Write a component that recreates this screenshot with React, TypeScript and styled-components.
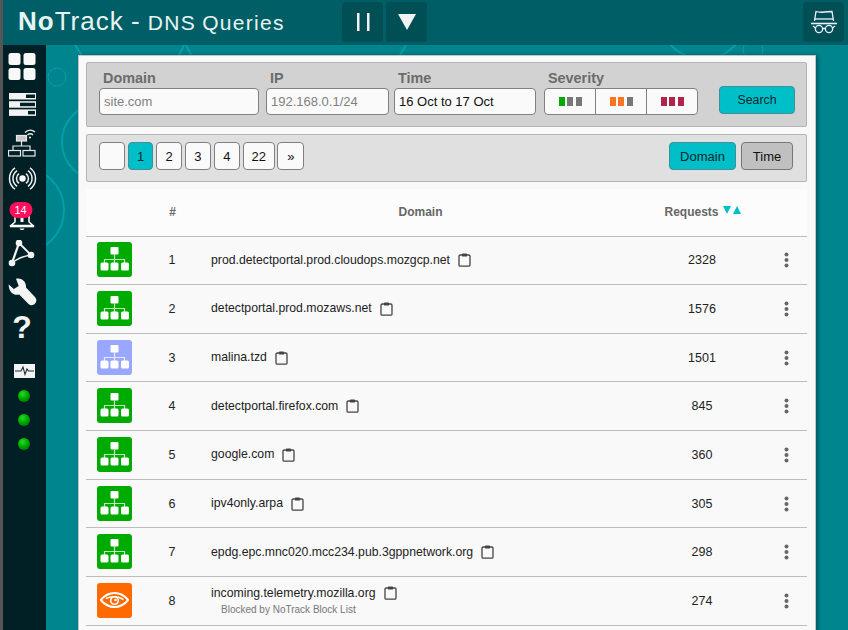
import React from "react";
import styled, { createGlobalStyle } from "styled-components";

const GlobalStyle = createGlobalStyle`
  html, body {
    margin: 0;
    padding: 0;
    height: 100%;
    overflow: hidden;
    font-family: "Liberation Sans", Arial, sans-serif;
    color: #222;
  }
  * { box-sizing: border-box; }
`;

type IconKind = "green" | "blue" | "orange";

const rows: { domain: string; count: number; kind: IconKind; note?: string }[] = [
  { domain: "prod.detectportal.prod.cloudops.mozgcp.net", count: 2328, kind: "green" },
  { domain: "detectportal.prod.mozaws.net", count: 1576, kind: "green" },
  { domain: "malina.tzd", count: 1501, kind: "blue" },
  { domain: "detectportal.firefox.com", count: 845, kind: "green" },
  { domain: "google.com", count: 360, kind: "green" },
  { domain: "ipv4only.arpa", count: 305, kind: "green" },
  { domain: "epdg.epc.mnc020.mcc234.pub.3gppnetwork.org", count: 298, kind: "green" },
  { domain: "incoming.telemetry.mozilla.org", count: 274, kind: "orange", note: "Blocked by NoTrack Block List" },
];

const kindColors: Record<IconKind, string> = {
  green: "#00ab00",
  blue: "#9aa7ff",
  orange: "#ff6a00",
};

const severities = [
  ["#00ab00", "#777", "#777"],
  ["#ff7420", "#ff7420", "#777"],
  ["#b0234a", "#b0234a", "#b0234a"],
];

const Shell = styled.div`
  position: relative;
  width: 848px;
  height: 630px;
  overflow: hidden;
  border-left: 3px solid #555;
  background: #00858e;
  display: grid;
  grid-template-rows: 45px 1fr;
`;

const TopBar = styled.header`
  position: relative;
  z-index: 2;
  background: #005f66;
  display: flex;
  align-items: center;
  padding: 0 4px 1px 15px;
  color: #e8f4f4;
`;

const Title = styled.h1`
  margin: 0 0 2px;
  width: 324px;
  font-size: 26px;
  font-weight: 400;
  letter-spacing: 1px;
  word-spacing: -1px;
  white-space: nowrap;
  b { font-weight: 700; }
`;

const Subtitle = styled.span`
  font-size: 21px;
  letter-spacing: 1.3px;
`;

const TopButton = styled.button`
  width: 41px;
  height: 40px;
  border: 0;
  padding: 0;
  border-radius: 4px;
  background: #004f55;
  display: flex;
  align-items: center;
  justify-content: center;
  margin-right: 3px;
  &:last-child { margin: 0 0 0 auto; }
`;

const Body = styled.div`
  position: relative;
  display: flex;
  min-height: 0;
`;

const Decoration = styled.svg`
  position: absolute;
  inset: 0;
  width: 845px;
  height: 585px;
`;

const Sidebar = styled.nav`
  position: relative;
  z-index: 1;
  width: 43px;
  background: #002025;
  display: flex;
  flex-direction: column;
  align-items: center;
  padding: 8px 5px 0 0;
`;

const NavIcon = styled.div<{ $h: number; $mb: number }>`
  position: relative;
  height: ${({ $h }) => $h}px;
  margin-bottom: ${({ $mb }) => $mb}px;
  display: flex;
  align-items: center;
  justify-content: center;
`;

const Badge = styled.span`
  position: absolute;
  top: -2px;
  left: calc(50% - 1.5px);
  transform: translateX(-50%);
  width: 23px;
  height: 16px;
  border-radius: 8px;
  background: #ff0f5c;
  color: #fff;
  font-size: 11px;
  line-height: 16px;
  text-align: center;
`;

const StatusGroup = styled.div`
  margin-left: 4px;
  display: flex;
  flex-direction: column;
  align-items: center;
`;

const Pulse = styled.div`
  height: 14px;
  margin-bottom: 12px;
`;

const Led = styled.span`
  width: 12px;
  height: 12px;
  border-radius: 50%;
  margin-bottom: 12px;
  background: radial-gradient(circle at 38% 32%, #22e022 0, #00b000 40%, #005a00 100%);
`;

const Card = styled.main`
  position: relative;
  z-index: 1;
  width: 738px;
  margin: 10px 0 0 32px;
  padding: 6px 8px 0 7px;
  background: #f9f9f9;
  border: 1px solid #c4c4c4;
  border-bottom: 0;
  box-shadow: 2px 0 4px rgba(0, 0, 0, 0.35);
  height: 600px;
`;

const Panel = styled.section<{ $bg: string; $h: number }>`
  height: ${({ $h }) => $h}px;
  background: ${({ $bg }) => $bg};
  border: 1px solid #b4b4b4;
  border-radius: 2px;
  margin-bottom: 7px;
  display: flex;
  padding-left: 12px;
`;

const Field = styled.div<{ $w: number; $after: number }>`
  width: ${({ $w }) => $w}px;
  margin-right: ${({ $after }) => $after}px;
  padding-top: 6px;
`;

const Label = styled.label`
  display: block;
  padding-left: 4px;
  height: 19px;
  font-size: 14.4px;
  line-height: 18px;
  font-weight: 700;
  color: #6b6b6b;
`;

const Input = styled.input`
  width: 100%;
  height: 27px;
  border: 1px solid #808080;
  border-radius: 4px;
  background: #fafafa;
  padding: 0 4px;
  font: 13px "Liberation Sans", Arial, sans-serif;
  color: #111;
  &::placeholder { color: #808080; opacity: 1; }
`;

const SeverityGroup = styled.div`
  display: flex;
  height: 27px;
  border: 1px solid #808080;
  border-radius: 4px;
  background: #fafafa;
  overflow: hidden;
`;

const SeverityCell = styled.div`
  flex: 1;
  display: flex;
  align-items: center;
  justify-content: center;
  gap: 2.5px;
  & + & { border-left: 1px solid #808080; }
`;

const Pip = styled.i<{ $c: string }>`
  display: block;
  width: 6px;
  height: 9px;
  background: ${({ $c }) => $c};
`;

const Button = styled.button<{ $on?: boolean; $w: number; $grey?: boolean }>`
  width: ${({ $w }) => $w}px;
  height: 28px;
  padding: 0;
  border: 1px solid ${({ $on, $grey }) => ($on ? "#3f8f96" : $grey ? "#777" : "#808080")};
  border-radius: 4px;
  background: ${({ $on, $grey }) => ($on ? "#00bfc8" : $grey ? "#c0c0c0" : "#fafafa")};
  color: ${({ $on }) => ($on ? "#06272b" : "#111")};
  font: 13px "Liberation Sans", Arial, sans-serif;
  text-align: center;
`;

const SearchButton = styled(Button)`
  align-self: flex-start;
  margin: 23px 0 0 21px;
  font-size: 12.3px;
`;

const Pager = styled.div`
  display: flex;
  align-items: center;
  gap: 2.5px;
  flex: 1;
  padding-bottom: 4px;
`;

const SortGroup = styled.div`
  display: flex;
  align-items: center;
  gap: 5px;
  padding: 0 13px 4px 0;
`;

const TableRow = styled.div<{ $head?: boolean }>`
  display: grid;
  grid-template-columns: 58px 56px 440px 124px 44px;
  align-items: center;
  height: ${({ $head }) => ($head ? 47.5 : 48.65)}px;
  border-bottom: 1px solid #bdbdbd;
  font-size: 12.5px;
  background: ${({ $head }) => ($head ? "#fcfcfc" : "transparent")};
`;

const HeadCell = styled.div`
  display: flex;
  justify-content: center;
  align-items: center;
  gap: 4px;
  font-size: 12px;
  font-weight: 700;
  color: #666;
  padding: 0 0 1px 1px;
`;

const SortArrows = styled.svg`
  margin-bottom: 3px;
`;

const Num = styled.div`
  text-align: center;
`;

const IconBox = styled.div<{ $c: string }>`
  margin: 0 0 1px 11px;
  width: 35px;
  height: 35px;
  border-radius: 3px;
  background: ${({ $c }) => $c};
  display: flex;
  align-items: center;
  justify-content: center;
`;

const DomainCell = styled.div`
  padding-left: 11px;
`;

const DomainLine = styled.div`
  display: flex;
  align-items: center;
  gap: 8px;
  font-size: 12.25px;
  line-height: 15px;
`;

const Note = styled.div`
  margin: 3px 0 0 10px;
  font-size: 10px;
  line-height: 12px;
  color: #777;
`;

const Dots = styled.div`
  display: flex;
  justify-content: center;
`;

const NetworkIcon = () => (
  <svg width="29" height="29" viewBox="0 0 29 29">
    <rect x="10.5" y="2" width="8" height="7.5" rx="1" fill="#fff" />
    <path d="M14.5 9.5V19M4.5 19v-4.5h20V19" fill="none" stroke="#fff" strokeOpacity=".75" strokeWidth="1.2" />
    <rect x="0.5" y="17.5" width="8" height="8" rx="1.5" fill="#fff" />
    <rect x="10.5" y="17.5" width="8" height="8" rx="1.5" fill="#fff" />
    <rect x="21" y="17.5" width="8" height="8" rx="1.5" fill="#fff" />
  </svg>
);

const EyeIcon = () => (
  <svg width="29" height="16" viewBox="0 0 29 16" fill="none" stroke="#fff">
    <path d="M.8 8C5 3 10 1 14.5 1S24 3 28.200 8C24 13 19 15 14.500 15S5 13 .8 8z" strokeWidth="2" />
    <path d="M6 6.500C11 4 18 4 23.500 7.500" strokeWidth="1.500" />
    <circle cx="14.500" cy="8.500" r="3.800" strokeWidth="1.600" />
    <circle cx="15.500" cy="8" r="1.300" fill="#fff" stroke="none" />
  </svg>
);

const Clipboard = () => (
  <svg width="13" height="14" viewBox="0 0 13 14">
    <rect x="1" y="2" width="11" height="11.200" rx="1.200" fill="none" stroke="#444" strokeWidth="1.300" />
    <rect x="4" y="0.500" width="5" height="3" rx=".6" fill="#444" />
  </svg>
);

const MenuDots = () => (
  <svg width="5" height="16" viewBox="0 0 5 16">
    <circle cx="2.500" cy="2.500" r="2" fill="#666" />
    <circle cx="2.500" cy="8" r="2" fill="#666" />
    <circle cx="2.500" cy="13.500" r="2" fill="#666" />
  </svg>
);

const HatIcon = () => (
  <svg width="28" height="28" viewBox="0 0 28 28" fill="none" stroke="#eef" strokeWidth="1.300">
    <path d="M4.500 13 6 3.500c3 1 5 1 8 .5s5-.5 8-.5L23.500 13" />
    <path d="M1 15.500h26" strokeWidth="1.600" />
    <path d="M4.500 11h19" />
    <circle cx="9" cy="21" r="3.600" />
    <circle cx="19" cy="21" r="3.600" />
    <path d="M12.500 20.500h3M5.500 20 3 18M22.500 20 25 18" />
  </svg>
);

const DashboardIcon = () => (
  <svg width="28" height="28" viewBox="0 0 28 28" fill="#f8f8f8">
    <rect x="0.500" y="0" width="12" height="12" rx="2.500" />
    <rect x="15.500" y="0" width="12" height="12" rx="2.500" />
    <rect x="0.500" y="15" width="12" height="12" rx="2.500" />
    <rect x="15.500" y="15" width="12" height="12" rx="2.500" />
  </svg>
);

const ServersIcon = () => (
  <svg width="27" height="23" viewBox="0 0 27 23">
    <rect x="0" y="0" width="27" height="6.500" fill="#f4f4f4" />
    <rect x="17" y="1.500" width="9" height="3.500" fill="#002025" />
    <rect x="0" y="8.200" width="27" height="6.500" fill="#f4f4f4" />
    <rect x="11" y="9.700" width="15" height="3.500" fill="#002025" />
    <rect x="0" y="16.400" width="27" height="6.500" fill="#f4f4f4" />
    <rect x="19" y="17.900" width="7" height="3.500" fill="#002025" />
  </svg>
);

const NetworkWifiIcon = () => (
  <svg width="28" height="29" viewBox="0 0 28 29" fill="none" stroke="#e8e8e8" strokeWidth="1.200">
    <rect x="8.500" y="7.500" width="10" height="5.500" fill="#c8c8c8" />
    <path d="M13.500 13v5M5 23v-5h17v5" />
    <rect x="0.500" y="22.500" width="12" height="5.500" />
    <rect x="15" y="22.500" width="12" height="5.500" />
    <path d="M17 4.500c3-3 7-3 10-.5M19.500 7c2-1.500 4-1.500 5.500 0" strokeWidth="1.400" />
    <circle cx="22" cy="9.500" r="1" fill="#fff" stroke="none" />
  </svg>
);

const RadioIcon = () => (
  <svg width="29" height="25" viewBox="0 0 29 25" fill="none" stroke="#f0f0f0" strokeWidth="1.500">
    <circle cx="14.500" cy="12.500" r="3.200" fill="#fff" stroke="none" />
    <path d="M11.060 7.600A6 6 0 0 0 11.060 17.400M17.940 7.600A6 6 0 0 1 17.940 17.400" />
    <path d="M9.050 4.700A9.500 9.500 0 0 0 9.050 20.300M19.950 4.700A9.500 9.500 0 0 1 19.950 20.300" />
    <path d="M7.040 1.850A13 13 0 0 0 7.040 23.150M21.960 1.850A13 13 0 0 1 21.960 23.150" />
  </svg>
);

const BellIcon = () => (
  <svg width="26" height="27" viewBox="0 0 26 27" fill="none" stroke="#fff" strokeWidth="1.500">
    <path d="M6 8v10l-4 3.500h22L20 18V8" />
    <path d="M1 22.300h24" strokeWidth="2" />
    <path d="M10.500 24.500c1 2 4 2 5 0z" fill="#fff" stroke="none" />
    <rect x="11.500" y="14" width="3" height="4" fill="#fff" stroke="none" />
  </svg>
);

const ShareIcon = () => (
  <svg width="28" height="29" viewBox="0 0 28 29" fill="none" stroke="#f4f4f4" strokeWidth="1.500">
    <path d="M11 3 4 23" strokeWidth="2.200" />
    <path d="M11 3 23 15" strokeWidth="1.800" />
    <path d="M4 23C10 18 16 16 23 15" strokeWidth="1.300" />
    <circle cx="11" cy="3" r="3.300" fill="#f4f4f4" stroke="none" />
    <circle cx="23" cy="15" r="3.300" fill="#f4f4f4" stroke="none" />
    <circle cx="4" cy="23" r="3.300" fill="#f4f4f4" stroke="none" />
  </svg>
);

const WrenchIcon = () => (
  <svg width="29" height="29" viewBox="0 0 29 29">
    <path
      d="M8 .7C13-.5 18.500 3 18 9.500L27.200 19.200C29 21.500 28.500 24 26.800 25.800C25 27.600 22.500 27.800 20.500 26L11.200 16.500C5 18 .5 13 .7 6.500L5.800 11L10.700 8L8 .7Z"
      fill="#f4f4f4"
    />
  </svg>
);

const HelpGlyph = styled.span`
  margin-top: -5px;
  font-size: 32px;
  line-height: 30px;
  font-weight: 700;
  color: #f4f4f4;
`;

const PulseIcon = () => (
  <svg width="21" height="14" viewBox="0 0 21 14">
    <rect width="21" height="14" fill="#f4f4f4" />
    <path d="M1 7h6l2-4 2 7.500L13 5l1.500 2H20" fill="none" stroke="#1d3135" strokeWidth="1.100" />
  </svg>
);

export default function App() {
  return (
    <>
      <GlobalStyle />
      <Shell>
        <TopBar>
          <Title>
            <b>No</b>Track - <Subtitle>DNS Queries</Subtitle>
          </Title>
          <TopButton aria-label="pause">
            <svg width="14" height="18" viewBox="0 0 14 18">
              <rect x="1" y="0" width="2.500" height="18" fill="#f2f2f2" />
              <rect x="11" y="0" width="2.500" height="18" fill="#f2f2f2" />
            </svg>
          </TopButton>
          <TopButton aria-label="menu">
            <svg width="18" height="16" viewBox="0 0 18 16">
              <path d="M0 0h18L9 16z" fill="#f2f2f2" />
            </svg>
          </TopButton>
          <TopButton aria-label="privacy">
            <HatIcon />
          </TopButton>
        </TopBar>
        <Body>
          <Decoration viewBox="0 0 845 585" fill="none" stroke="#00a0aa" strokeWidth="2">
            <circle cx="54" cy="32" r="9" strokeWidth="1" />
            <circle cx="98" cy="97" r="39" />
            <circle cx="18" cy="165" r="43" />
            <path d="M72 0l8 12M176 10l5-10M183 0l5 10M403 0l-6 10" />
            <circle cx="700" cy="-30" r="44" />
            <circle cx="750" cy="5" r="10" strokeWidth="1" />
          </Decoration>
          <Sidebar>
            <NavIcon $h={28} $mb={12}><DashboardIcon /></NavIcon>
            <NavIcon $h={23} $mb={11}><ServersIcon /></NavIcon>
            <NavIcon $h={30} $mb={9}><NetworkWifiIcon /></NavIcon>
            <NavIcon $h={25} $mb={13}><RadioIcon /></NavIcon>
            <NavIcon $h={27} $mb={9}>
              <BellIcon />
              <Badge>14</Badge>
            </NavIcon>
            <NavIcon $h={29} $mb={9}><ShareIcon /></NavIcon>
            <NavIcon $h={29} $mb={8}><WrenchIcon /></NavIcon>
            <NavIcon $h={28} $mb={21}><HelpGlyph>?</HelpGlyph></NavIcon>
            <StatusGroup>
              <Pulse><PulseIcon /></Pulse>
              <Led />
              <Led />
              <Led />
            </StatusGroup>
          </Sidebar>
          <Card>
            <Panel $bg="#d2d2d2" $h={65}>
              <Field $w={160} $after={7}>
                <Label>Domain</Label>
                <Input placeholder="site.com" />
              </Field>
              <Field $w={123} $after={5}>
                <Label>IP</Label>
                <Input placeholder="192.168.0.1/24" />
              </Field>
              <Field $w={142} $after={8}>
                <Label>Time</Label>
                <Input defaultValue="16 Oct to 17 Oct" />
              </Field>
              <Field $w={154} $after={0}>
                <Label>Severity</Label>
                <SeverityGroup>
                  {severities.map((pips, i) => (
                    <SeverityCell key={i}>
                      {pips.map((c, j) => <Pip key={j} $c={c} />)}
                    </SeverityCell>
                  ))}
                </SeverityGroup>
              </Field>
              <SearchButton $on $w={76}>Search</SearchButton>
            </Panel>
            <Panel $bg="#e0e0e0" $h={48}>
              <Pager>
                <Button $w={26.3} />
                <Button $on $w={25.6}>1</Button>
                <Button $w={26.4}>2</Button>
                <Button $w={26.4}>3</Button>
                <Button $w={26.4}>4</Button>
                <Button $w={32.4}>22</Button>
                <Button $w={27}>»</Button>
              </Pager>
              <SortGroup>
                <Button $on $w={67}>Domain</Button>
                <Button $grey $w={52}>Time</Button>
              </SortGroup>
            </Panel>
            <TableRow $head>
              <HeadCell />
              <HeadCell>#</HeadCell>
              <HeadCell>Domain</HeadCell>
              <HeadCell>
                Requests
                <SortArrows width="18" height="8" viewBox="0 0 18 8">
                  <path d="M0 0h8L4 8zM10 8h8l-4-8z" fill="#00bfc8" />
                </SortArrows>
              </HeadCell>
              <HeadCell />
            </TableRow>
            {rows.map((row, i) => (
              <TableRow key={row.domain}>
                <IconBox $c={kindColors[row.kind]}>
                  {row.kind === "orange" ? <EyeIcon /> : <NetworkIcon />}
                </IconBox>
                <Num>{i + 1}</Num>
                <DomainCell>
                  <DomainLine>
                    {row.domain}
                    <Clipboard />
                  </DomainLine>
                  {row.note && <Note>{row.note}</Note>}
                </DomainCell>
                <Num>{row.count}</Num>
                <Dots><MenuDots /></Dots>
              </TableRow>
            ))}
          </Card>
        </Body>
      </Shell>
    </>
  );
}
